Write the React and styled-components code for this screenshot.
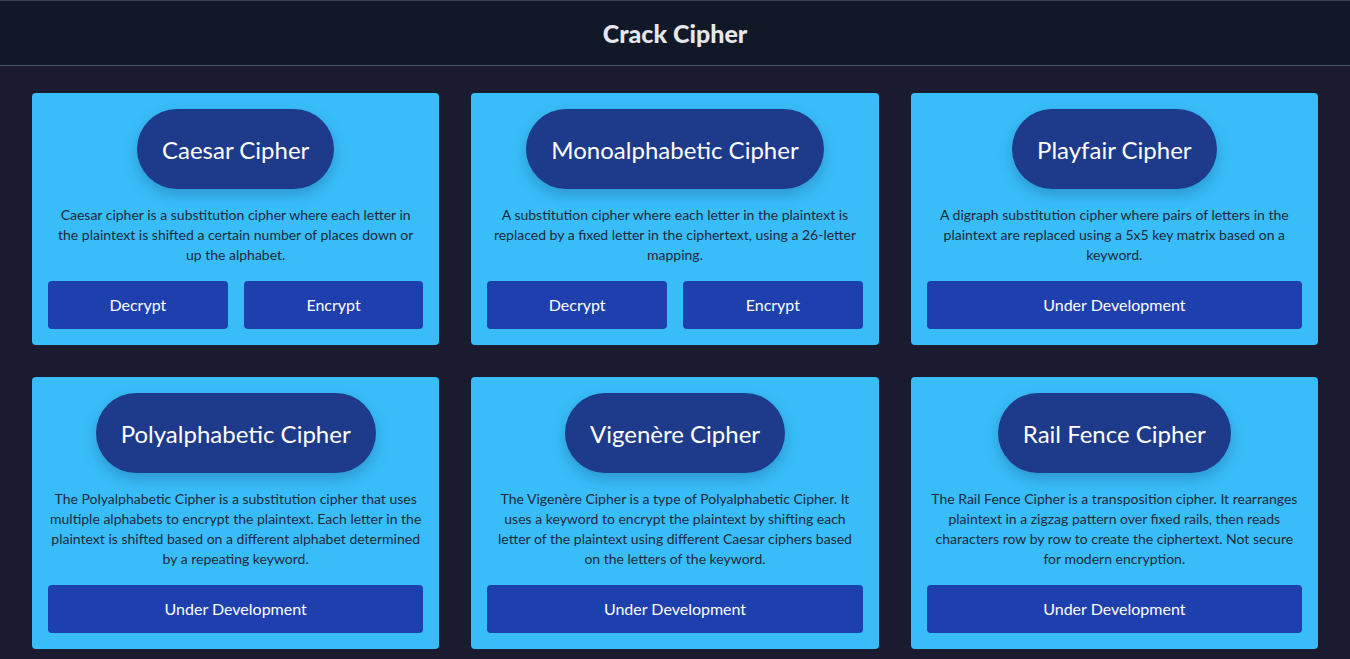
import React from 'react';
import styled, { createGlobalStyle } from 'styled-components';

const GlobalStyle = createGlobalStyle`
  html, body {
    margin: 0;
    padding: 0;
    background-color: #1b1b2f;
    font-family: Lato, "Open Sans", sans-serif;
    scrollbar-width: none;
  }
  ::-webkit-scrollbar {
    width: 0;
    height: 0;
  }
  * {
    box-sizing: border-box;
  }
`;

const Header = styled.header`
  height: 66px;
  background-color: #111827;
  border-top: 1px solid #374151;
  border-bottom: 1px solid #4b5563;
  display: flex;
  align-items: center;
  justify-content: center;
`;

const Title = styled.h1`
  margin: 0;
  font-size: 25px;
  font-weight: 900;
  color: #e5e7eb;
`;

const Grid = styled.main`
  display: grid;
  grid-template-columns: repeat(3, 1fr);
  gap: 32px;
  padding: 27px 32px 32px;
  align-items: start;
`;

const Card = styled.div`
  background-color: #38bdf8;
  border-radius: 4px;
  padding: 16px;
  display: flex;
  flex-direction: column;
  align-items: center;
  gap: 16px;
`;

const Pill = styled.h2`
  margin: 0;
  padding: 25px 25px 23px;
  border-radius: 9999px;
  background-color: #1e3a8a;
  color: #ffffff;
  font-size: 24px;
  font-weight: 400;
  line-height: 32px;
  box-shadow: 0 6px 14px rgba(15, 40, 90, 0.25);
`;

const Desc = styled.p`
  margin: 0;
  padding: 0 1.6px;
  font-size: 14px;
  line-height: 20px;
  color: #1e293b;
  text-align: center;
`;

const Actions = styled.div`
  width: 100%;
  display: flex;
  gap: 16px;
`;

const Button = styled.button`
  flex: 1;
  height: 48px;
  padding: 0 0 2px;
  border: none;
  border-radius: 4px;
  background-color: #1e40af;
  color: #ffffff;
  font-family: inherit;
  font-size: 16px;
  cursor: pointer;
`;

const ciphers = [
  {
    name: 'Caesar Cipher',
    desc: 'Caesar cipher is a substitution cipher where each letter in the plaintext is shifted a certain number of places down or up the alphabet.',
    ready: true,
  },
  {
    name: 'Monoalphabetic Cipher',
    desc: 'A substitution cipher where each letter in the plaintext is replaced by a fixed letter in the ciphertext, using a 26-letter mapping.',
    ready: true,
  },
  {
    name: 'Playfair Cipher',
    desc: 'A digraph substitution cipher where pairs of letters in the plaintext are replaced using a 5x5 key matrix based on a keyword.',
  },
  {
    name: 'Polyalphabetic Cipher',
    desc: 'The Polyalphabetic Cipher is a substitution cipher that uses multiple alphabets to encrypt the plaintext. Each letter in the plaintext is shifted based on a different alphabet determined by a repeating keyword.',
  },
  {
    name: 'Vigenère Cipher',
    desc: 'The Vigenère Cipher is a type of Polyalphabetic Cipher. It uses a keyword to encrypt the plaintext by shifting each letter of the plaintext using different Caesar ciphers based on the letters of the keyword.',
  },
  {
    name: 'Rail Fence Cipher',
    desc: 'The Rail Fence Cipher is a transposition cipher. It rearranges plaintext in a zigzag pattern over fixed rails, then reads characters row by row to create the ciphertext. Not secure for modern encryption.',
  },
];

const App = () => {
  return (
    <>
      <GlobalStyle />
      <Header>
        <Title>Crack Cipher</Title>
      </Header>
      <Grid>
        {ciphers.map((c) => (
          <Card key={c.name}>
            <Pill>{c.name}</Pill>
            <Desc>{c.desc}</Desc>
            <Actions>
              {c.ready ? (
                <>
                  <Button>Decrypt</Button>
                  <Button>Encrypt</Button>
                </>
              ) : (
                <Button>Under Development</Button>
              )}
            </Actions>
          </Card>
        ))}
      </Grid>
    </>
  );
};

export default App;
